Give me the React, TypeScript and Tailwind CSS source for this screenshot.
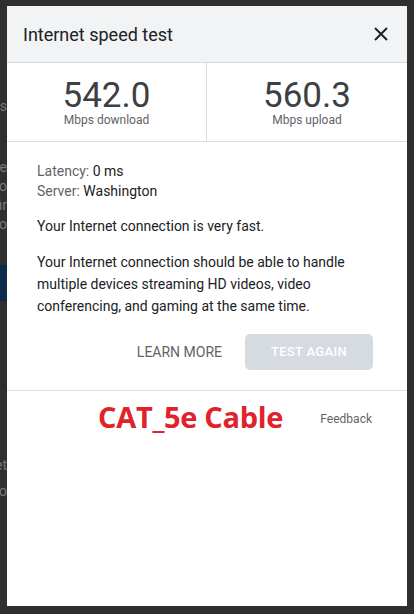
import React from 'react';

const roboto = { fontFamily: 'Roboto, "Liberation Sans", sans-serif' };

function Backdrop() {
  // bits of the page behind the dialog, peeking out at the left edge
  return (
    <div className="absolute inset-0 text-[14px] text-[#7a7a7a]" style={roboto}>
      <div className="absolute left-[-40px] top-[96px] w-[47px] text-right">Tes</div>
      <div className="absolute left-[-40px] top-[158px] w-[47px] text-right leading-[19px]">
        <div>de</div>
        <div>yo</div>
        <div>fir</div>
        <div>io</div>
      </div>
      <div className="absolute left-0 top-[265px] h-[36px] w-[7px] bg-[#0b2a4d]" />
      <div className="absolute left-[-40px] top-[455px] w-[47px] text-right">et</div>
      <div className="absolute left-[-40px] top-[481px] w-[47px] text-right">Ro</div>
    </div>
  );
}

export default function App() {
  return (
    <div className="relative h-[614px] w-[414px] overflow-hidden bg-[#2f2f2f]">
      <Backdrop />
      <div className="relative pl-[7px] pt-[6px]">
        <div className="flex h-[600px] w-[400px] flex-col bg-white" style={roboto}>
          <div className="flex h-[57px] items-center justify-between border-b border-[#d4d6d9] bg-[#f1f3f4] pl-[16px] pr-[18px]">
            <h1 className="text-[18px] text-[#202124]">Internet speed test</h1>
            <svg width="16" height="16" viewBox="0 0 16 16" className="text-[#202124]">
              <path d="M2 2 L14 14 M14 2 L2 14" stroke="currentColor" strokeWidth="2" />
            </svg>
          </div>

          <div className="grid h-[79px] grid-cols-2 border-b border-[#dadce0]">
            <div className="flex flex-col items-center border-r border-[#dadce0] pt-[16px]">
              <div className="text-[35px] leading-[34px] text-[#3c4043]">542.0</div>
              <div className="mt-[1px] text-[12px] leading-[12px] text-[#5f6368]">Mbps download</div>
            </div>
            <div className="flex flex-col items-center pt-[16px]">
              <div className="text-[35px] leading-[34px] text-[#3c4043]">560.3</div>
              <div className="mt-[1px] text-[12px] leading-[12px] text-[#5f6368]">Mbps upload</div>
            </div>
          </div>

          <div className="flex flex-col border-b border-[#e0e0e0] px-[30px] pb-[20px] pt-[19px] text-[14px] text-[#202124]">
            <div className="leading-[20px]">
              <span className="text-[#5f6368]">Latency:</span> 0 ms
            </div>
            <div className="leading-[20px]">
              <span className="text-[#5f6368]">Server:</span> Washington
            </div>
            <p className="mt-[14px] leading-[22px]">Your Internet connection is very fast.</p>
            <p className="mt-[14px] leading-[22px]">
              Your Internet connection should be able to handle multiple devices streaming HD videos, video
              conferencing, and gaming at the same time.
            </p>
            <div className="mr-[4px] mt-[17px] flex items-center justify-end">
              <span className="mr-[23px] text-[14px] uppercase text-[#5f6368]">Learn more</span>
              <button className="h-[36px] w-[128px] rounded-[5px] bg-[#d6dbe1] text-[13px] font-medium uppercase tracking-[0.3px] text-white">
                Test again
              </button>
            </div>
          </div>

          <div className="flex items-start justify-between pl-[91px] pr-[35px] pt-[8px]">
            <span
              className="text-[29px] font-bold leading-[36px] text-[#e0232b]"
              style={{ fontFamily: '"Open Sans", "Noto Sans", sans-serif', letterSpacing: '-0.3px' }}
            >
              CAT_5e Cable
            </span>
            <span className="mt-[11px] text-[12px] text-[#5f6368]">Feedback</span>
          </div>
        </div>
      </div>
    </div>
  );
}
